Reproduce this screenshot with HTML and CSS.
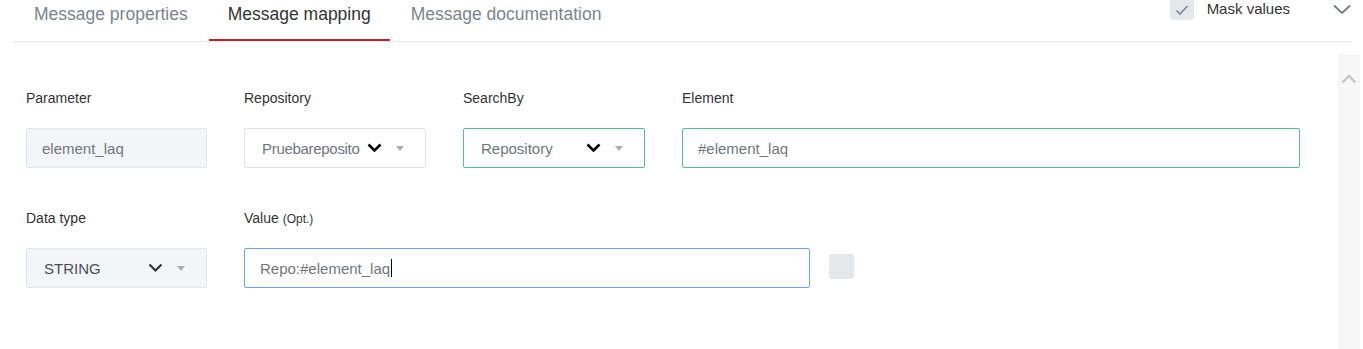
FILE: index.html
```html
<!DOCTYPE html>
<html lang="en">
<head>
    <meta charset="UTF-8">
    <title>Message mapping</title>
    <link rel="stylesheet" href="styles.css">
</head>
<body>
    <div class="header">
        <div class="tab">Message properties</div>
        <div class="tab active">Message mapping</div>
        <div class="tab">Message documentation</div>
        <div class="mask">
            <span class="check">
                <svg width="14" height="12" viewBox="0 0 14 12"><path d="M1.5 6.5 L5 10 L12.5 2" fill="none" stroke="#7f8a94" stroke-width="1.6"/></svg>
            </span>
            <span class="mask-label">Mask values</span>
        </div>
        <svg class="collapse" width="18" height="11" viewBox="0 0 18 11"><path d="M1 1.5 L9 9 L17 1.5" fill="none" stroke="#6f7b86" stroke-width="1.8"/></svg>
    </div>

    <div class="main">
        <div class="form">
            <div class="row">
                <div class="field first">
                    <label>Parameter</label>
                    <div class="input readonly">element_laq</div>
                </div>
                <div class="field">
                    <label>Repository</label>
                    <div class="input select">
                        <span class="value tight">Pruebareposito</span>
                        <svg class="chev" width="15" height="10" viewBox="0 0 15 10"><path d="M1.5 1.5 L7.5 7.5 L13.5 1.5" fill="none" stroke="#000" stroke-width="2.6"/></svg>
                        <span class="caret"></span>
                    </div>
                </div>
                <div class="field">
                    <label>SearchBy</label>
                    <div class="input select valid">
                        <span class="value">Repository</span>
                        <svg class="chev" width="15" height="10" viewBox="0 0 15 10"><path d="M1.5 1.5 L7.5 7.5 L13.5 1.5" fill="none" stroke="#000" stroke-width="2.6"/></svg>
                        <span class="caret"></span>
                    </div>
                </div>
                <div class="field wide">
                    <label>Element</label>
                    <div class="input valid">#element_laq</div>
                </div>
            </div>
            <div class="row">
                <div class="field first">
                    <label>Data type</label>
                    <div class="input select readonly">
                        <span class="value dark">STRING</span>
                        <svg class="chev" width="15" height="10" viewBox="0 0 15 10"><path d="M1.5 1.5 L7.5 7.5 L13.5 1.5" fill="none" stroke="#333" stroke-width="2.2"/></svg>
                        <span class="caret"></span>
                    </div>
                </div>
                <div class="field value-field">
                    <label>Value <small>(Opt.)</small></label>
                    <div class="value-line">
                        <div class="input focused">Repo:#element_laq<span class="cursor"></span></div>
                        <span class="square"></span>
                    </div>
                </div>
            </div>
        </div>
        <div class="scrollbar">
            <svg width="16" height="10" viewBox="0 0 16 10"><path d="M1.5 8.5 L8 2 L14.5 8.5" fill="none" stroke="#c6c6c6" stroke-width="2.4"/></svg>
        </div>
    </div>
</body>
</html>
```

FILE: styles.css
```css
body {
    margin: 0;
    font-family: "Liberation Sans", Arial, sans-serif;
    color: #333;
    background: #fff;
    overflow: hidden;
}
.header {
    display: flex;
    align-items: flex-start;
    gap: 2px;
    margin: 0 11px 0 13px;
    padding-left: 2px;
    height: 41px;
    border-bottom: 1px solid #e6e9eb;
}
.tab {
    padding: 0 19px;
    height: 39px;
    line-height: 29px;
    font-size: 17.5px;
    color: #7a8591;
    border-bottom: 2px solid transparent;
}
.tab.active {
    color: #333;
    border-bottom-color: #b3272d;
}
.mask {
    margin-left: auto;
    display: flex;
    align-items: center;
    margin-top: -4px;
}
.check {
    width: 24px;
    height: 24px;
    border-radius: 4px;
    background: #e4e8eb;
    display: flex;
    align-items: center;
    justify-content: center;
    padding-top: 3px;
    box-sizing: border-box;
}
.mask-label {
    margin-left: 13px;
    font-size: 15px;
    color: #333;
    margin-top: 1px;
}
.collapse {
    margin: 4px 1px 0 41px;
}
.main {
    display: flex;
}
.form {
    flex: 1;
    padding: 46px 0 0 26px;
}
.row {
    display: flex;
    gap: 37px;
    margin-bottom: 40px;
}
.field {
    width: 182px;
}
.field.first {
    width: 181px;
}
.field.wide {
    width: 618px;
}
.field.value-field {
    width: auto;
}
label {
    display: block;
    height: 20px;
    line-height: 20px;
    font-size: 14px;
    color: #333;
    margin-bottom: 20px;
}
label small {
    font-size: 12px;
}
.input {
    box-sizing: border-box;
    height: 40px;
    border: 1px solid #e3e6e8;
    border-radius: 2px;
    background: #fff;
    padding: 0 15px;
    display: flex;
    align-items: center;
    font-size: 15px;
    color: #6f777d;
}
.input.readonly {
    background: #f3f6f8;
}
.input.valid {
    border-color: #52c08f;
}
.input.focused {
    width: 566px;
    border-color: #66a8e8;
}
.select {
    padding: 0 21px 0 17px;
}
.select .value {
    flex: 1;
    white-space: nowrap;
}
.select .value.tight {
    letter-spacing: -0.3px;
}
.select .value.dark {
    color: #4a4f54;
}
.chev {
    flex-shrink: 0;
    margin-left: 4px;
}
.caret {
    flex-shrink: 0;
    margin-left: 14px;
    width: 0;
    height: 0;
    border-left: 4px solid transparent;
    border-right: 4px solid transparent;
    border-top: 5px solid #a9afb4;
}
.cursor {
    display: inline-block;
    width: 1px;
    height: 18px;
    background: #000;
    margin-left: 1px;
}
.value-line {
    display: flex;
    align-items: center;
    gap: 19px;
}
.square {
    width: 25px;
    height: 25px;
    border-radius: 3px;
    background: #e4e8eb;
    margin-top: -3px;
}
.scrollbar {
    width: 22px;
    height: 300px;
    margin: 12px 3px 0 0;
    background: #f7f7f7;
    display: flex;
    justify-content: center;
    padding-top: 20px;
    box-sizing: border-box;
}
```
